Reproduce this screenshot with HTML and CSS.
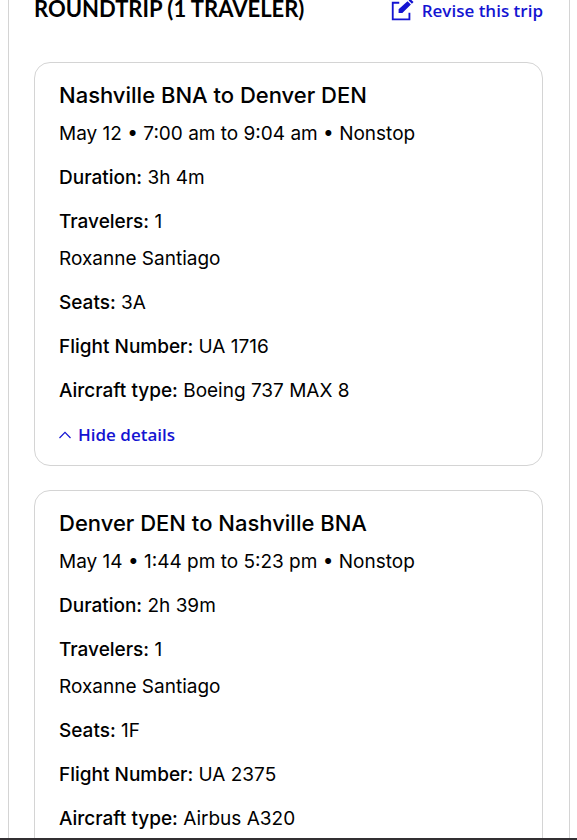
FILE: index.html
```html
<!DOCTYPE html>
<html lang="en">
    <head>
        <meta charset="UTF-8">
        <meta name="viewport" content="width=device-width, initial-scale=1.0">
        <title>Trip summary</title>
        <link rel="stylesheet" href="styles.css">
    </head>
    <body>
        <main class="page">
            <section class="trip-panel">
                <header class="trip-header">
                    <h1>ROUNDTRIP (1 TRAVELER)</h1>
                    <a href="#" class="revise-link">
                        <svg class="edit-icon" width="24" height="24" viewBox="0 0 24 24">
                            <path d="M9 3H1.900V21.100H20.100V14" fill="none" stroke="currentColor" stroke-width="2"/>
                            <path d="M8.300 14.300V10.200L18 1.300L21.700 4.900L12.400 14.300Z M19.200 .5L21 -1.200L24.600 2.300L22.800 4Z" fill="currentColor"/>
                        </svg>
                        <span>Revise this trip</span>
                    </a>
                </header>

                <article class="flight-card">
                    <h2>Nashville BNA to Denver DEN</h2>
                    <p class="flight-time">May 12 • 7:00 am to 9:04 am • Nonstop</p>
                    <p><strong>Duration:</strong> 3h 4m</p>
                    <p><strong>Travelers:</strong> 1</p>
                    <p class="traveler-name">Roxanne Santiago</p>
                    <p><strong>Seats:</strong> 3A</p>
                    <p><strong>Flight Number:</strong> UA 1716</p>
                    <p><strong>Aircraft type:</strong> Boeing 737 MAX 8</p>
                    <button type="button" class="details-button">
                        <svg width="12" height="8" viewBox="0 0 12 8">
                            <path d="M.5 7L6 1.300L11.500 7" fill="none" stroke="currentColor" stroke-width="1.200"/>
                        </svg>
                        Hide details
                    </button>
                </article>

                <article class="flight-card">
                    <h2>Denver DEN to Nashville BNA</h2>
                    <p class="flight-time">May 14 • 1:44 pm to 5:23 pm • Nonstop</p>
                    <p><strong>Duration:</strong> 2h 39m</p>
                    <p><strong>Travelers:</strong> 1</p>
                    <p class="traveler-name">Roxanne Santiago</p>
                    <p><strong>Seats:</strong> 1F</p>
                    <p><strong>Flight Number:</strong> UA 2375</p>
                    <p><strong>Aircraft type:</strong> Airbus A320</p>
                    <button type="button" class="details-button">
                        <svg width="12" height="8" viewBox="0 0 12 8">
                            <path d="M.5 7L6 1.300L11.500 7" fill="none" stroke="currentColor" stroke-width="1.200"/>
                        </svg>
                        Hide details
                    </button>
                </article>
            </section>
        </main>
        <footer class="bottom-bar"></footer>
    </body>
</html>
```
FILE: styles.css
```css
* {
    box-sizing: border-box;
}
body {
    margin: 0;
    height: 100vh;
    display: flex;
    flex-direction: column;
    background-color: #fff;
    color: #000;
    font-family: Inter, "Liberation Sans", sans-serif;
    font-size: 19px;
    line-height: 28px;
}
.page {
    flex: 1;
    min-height: 0;
    overflow: hidden;
    padding: 0 7px 0 8px;
}
.trip-panel {
    padding: 0 26px 24px 25px;
    border-left: 1px solid #d4d4d4;
    border-right: 1px solid #d4d4d4;
}
.trip-header {
    display: flex;
    justify-content: space-between;
    align-items: flex-start;
    margin-bottom: 40px;
}
.trip-header h1 {
    margin: 0;
    font-family: Lato, sans-serif;
    font-size: 22px;
    font-weight: 700;
    line-height: 18px;
}
.revise-link {
    display: flex;
    align-items: center;
    gap: 8px;
    color: #1414d2;
    font-family: "Open Sans", sans-serif;
    font-size: 17px;
    font-weight: 600;
    line-height: 22px;
    text-decoration: none;
}
.edit-icon {
    height: 22px;
    overflow: visible;
}
.flight-card {
    padding: 16px 24px;
    margin-bottom: 24px;
    border: 1px solid #d4d4d4;
    border-radius: 16px;
}
.flight-card h2 {
    margin: 0;
    font-size: 22px;
    font-weight: 500;
    line-height: 32px;
}
.flight-card p {
    margin: 16px 0 0;
}
.flight-card .flight-time,
.flight-card .traveler-name {
    margin-top: 9px;
}
.flight-card strong {
    font-weight: 500;
}
.details-button {
    display: flex;
    align-items: center;
    gap: 7px;
    margin-top: 16px;
    padding: 0;
    border: none;
    background: none;
    color: #1414d2;
    font-family: "Open Sans", sans-serif;
    font-size: 17px;
    font-weight: 600;
    line-height: 28px;
    cursor: pointer;
}
.bottom-bar {
    height: 2px;
    background-color: #333033;
}
```
